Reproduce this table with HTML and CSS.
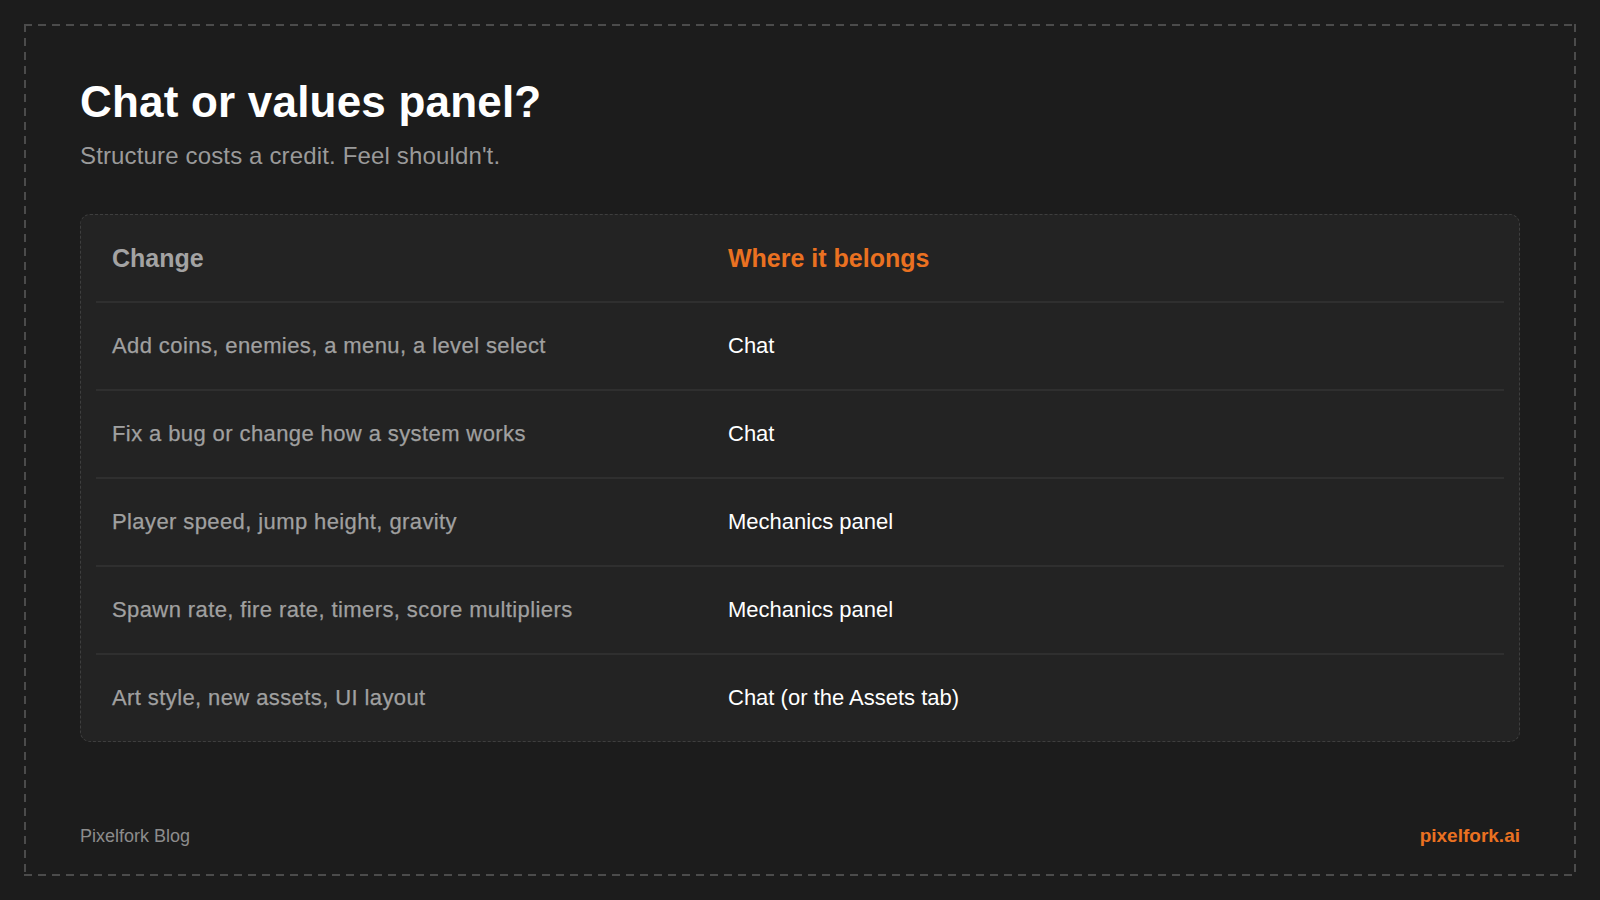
FILE: index.html
```html
<!DOCTYPE html>
<html lang="en">
<head>
<meta charset="utf-8">
<title>Chat or values panel?</title>
<link rel="stylesheet" href="styles.css">
</head>
<body>
<div class="page">
  <div class="frame">
    <h1 class="title">Chat or values panel?</h1>
    <p class="subtitle">Structure costs a credit. Feel shouldn't.</p>
    <div class="card">
      <div class="row head">
        <div class="cell c1">Change</div>
        <div class="cell c2">Where it belongs</div>
      </div>
      <div class="row">
        <div class="cell c1">Add coins, enemies, a menu, a level select</div>
        <div class="cell c2">Chat</div>
      </div>
      <div class="row">
        <div class="cell c1">Fix a bug or change how a system works</div>
        <div class="cell c2">Chat</div>
      </div>
      <div class="row">
        <div class="cell c1">Player speed, jump height, gravity</div>
        <div class="cell c2">Mechanics panel</div>
      </div>
      <div class="row">
        <div class="cell c1">Spawn rate, fire rate, timers, score multipliers</div>
        <div class="cell c2">Mechanics panel</div>
      </div>
      <div class="row">
        <div class="cell c1">Art style, new assets, UI layout</div>
        <div class="cell c2">Chat (or the Assets tab)</div>
      </div>
    </div>
    <div class="footer">
      <span class="blog">Pixelfork Blog</span>
      <span class="site">pixelfork.ai</span>
    </div>
  </div>
</div>
</body>
</html>
```

FILE: styles.css
```css
* { box-sizing: border-box; }

html, body {
  margin: 0;
  padding: 0;
  background: #1c1c1c;
}

body {
  font-family: "Liberation Sans", Arial, Helvetica, sans-serif;
  color: #ffffff;
}

.page {
  width: 1600px;
  height: 900px;
  padding: 24px;
}

.frame {
  height: 100%;
  padding: 52px 56px 28px;
  display: flex;
  flex-direction: column;
  background:
    repeating-linear-gradient(90deg, #4b4b4b 0 8px, transparent 8px 14px) left top / 100% 2px no-repeat,
    repeating-linear-gradient(90deg, #4b4b4b 0 8px, transparent 8px 14px) left bottom / 100% 2px no-repeat,
    repeating-linear-gradient(180deg, #4b4b4b 0 8px, transparent 8px 14px) left top / 2px 100% no-repeat,
    repeating-linear-gradient(180deg, #4b4b4b 0 8px, transparent 8px 14px) right top / 2px 100% no-repeat;
}

.title {
  margin: 0;
  font-size: 44px;
  line-height: 52px;
  font-weight: 700;
  letter-spacing: 0.2px;
  color: #ffffff;
}

.subtitle {
  margin: 12px 0 0;
  font-size: 24px;
  line-height: 32px;
  letter-spacing: 0.15px;
  color: #9a9a9a;
}

.card {
  margin-top: 42px;
  background: #232323;
  border: 1px dashed #3e3e3e;
  border-radius: 10px;
  padding: 0 15px;
}

.row {
  display: grid;
  grid-template-columns: 616px 1fr;
  align-items: center;
  height: 88px;
  border-bottom: 2px solid #2f2f2f;
}

.row:last-child {
  border-bottom: none;
  height: 86px;
}

.cell {
  padding-left: 16px;
  font-size: 22px;
}

.c1 {
  color: #a0a0a0;
  letter-spacing: 0.4px;
  -webkit-text-stroke: 0.25px #a0a0a0;
}

.c2 {
  color: #ffffff;
}

.head .cell {
  font-size: 25px;
  font-weight: 700;
  letter-spacing: 0;
  -webkit-text-stroke: 0;
}

.head .c1 { color: #a3a3a3; }
.head .c2 { color: #ea7121; }

.footer {
  margin-top: auto;
  display: flex;
  justify-content: space-between;
  align-items: baseline;
  line-height: 24px;
}

.blog {
  font-size: 18px;
  color: #8c8c8c;
}

.site {
  font-size: 19px;
  font-weight: 700;
  color: #ea7121;
}
```
